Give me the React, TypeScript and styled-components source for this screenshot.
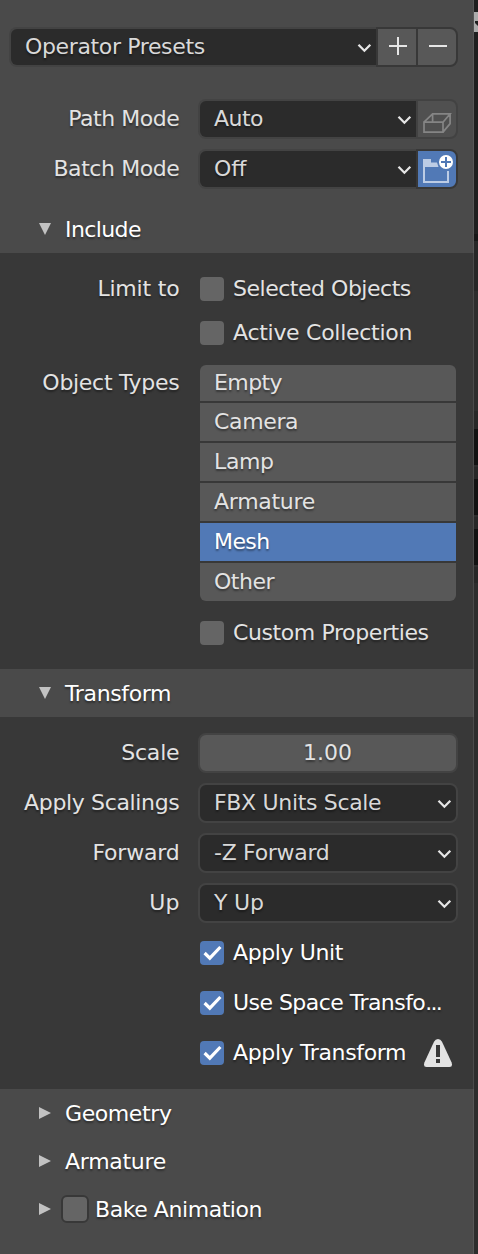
import React from 'react';
import styled, { createGlobalStyle, css } from 'styled-components';

const Global = createGlobalStyle`
  * { box-sizing: border-box; }
  body { margin: 0; background: #2b2b2b; }
`;

const Window = styled.div`
  display: flex;
  width: 478px;
  height: 1254px;
  overflow: hidden;
  font: 22px/25px 'DejaVu Sans', sans-serif;
  color: #e3e3e3;
  text-shadow: 0 2px 2px rgba(0, 0, 0, 0.4);
`;

const Sidebar = styled.main`
  width: 474px;
  flex: none;
  background: #4a4a4a;
  border-right: 1px solid #575757;
`;

const TopArea = styled.section`
  height: 205px;
  padding: 27px 0 0 9px;
`;

const PresetRow = styled.div`
  display: flex;
  width: 449px;
  margin-bottom: 32px;
`;

const Row = styled.div<{ $gap?: number }>`
  display: flex;
  align-items: center;
  height: 40px;
  margin-bottom: ${(p) => p.$gap ?? 10}px;
`;

const Tracked = styled.span<{ $track: number }>`
  letter-spacing: ${(p) => p.$track}px;
  white-space: nowrap;
`;

const Label = styled.span<{ $inset?: number }>`
  width: ${(p) => 180 - (p.$inset ?? 0)}px;
  flex: none;
  margin-right: 18px;
  padding: 0 0.6px 2px 0;
  text-align: right;
  white-space: nowrap;
`;

const Field = styled.div<{ $joined?: boolean }>`
  display: flex;
  align-items: center;
  justify-content: space-between;
  width: ${(p) => (p.$joined ? 218 : 260)}px;
  height: 40px;
  padding: 0 4px 2px 14px;
  background: #2b2b2b;
  border: 2px solid #434343;
  border-radius: ${(p) => (p.$joined ? '8px 0 0 8px' : '8px')};
  ${(p) => p.$joined && css`border-right: 0;`}
  color: #d9d9d9;
`;

const PresetField = styled(Field)`
  flex: 1;
  width: auto;
`;

const NumberField = styled(Field)`
  justify-content: center;
  padding: 0 1px 2px 0;
  background: #585858;
  color: #e3e3e3;
`;

const IconButton = styled.button<{ $last?: boolean; $tone?: 'active' | 'disabled' }>`
  display: flex;
  flex: none;
  width: ${(p) => (p.$last ? 42 : 40)}px;
  height: 40px;
  padding: 0;
  background: ${(p) => (p.$tone === 'active' ? '#5179b6' : p.$tone === 'disabled' ? '#505050' : '#585858')};
  border: 2px solid ${(p) => (p.$tone === 'disabled' ? '#424242' : '#383838')};
  border-right-width: ${(p) => (p.$last ? 2 : 0)}px;
  border-radius: ${(p) => (p.$last ? '0 8px 8px 0' : '0')};
`;

const Header = styled.header`
  display: flex;
  align-items: center;
  height: 48px;
  padding: 0 0 1px 38px;
  color: #fff;
`;

const Title = styled.span<{ $gap?: number }>`
  margin-left: ${(p) => p.$gap ?? 13}px;
  padding-top: 2px;
`;

const Body = styled.section`
  width: 473px;
  padding: 16px 0;
  background: #383838;
  box-shadow: 1px 0 #4a4a4a;
`;

const IncludeBody = styled(Body)`
  height: 416px;
`;

const TransformBody = styled(Body)`
  height: 372px;
`;

const Box = styled.span<{ $checked?: boolean; $outlined?: boolean }>`
  display: flex;
  flex: none;
  width: ${(p) => (p.$outlined ? 28 : 24)}px;
  height: ${(p) => (p.$outlined ? 28 : 24)}px;
  margin-left: ${(p) => (p.$outlined ? 9 : 0)}px;
  background: ${(p) => (p.$checked ? '#5179b6' : '#656565')};
  border: ${(p) => (p.$outlined ? '2px solid #383838' : '0')};
  border-radius: ${(p) => (p.$outlined ? 6 : 4)}px;
`;

const CheckLabel = styled.label<{ $checked?: boolean }>`
  display: flex;
  align-items: center;
  margin-left: 2px;
  white-space: nowrap;
  color: ${(p) => (p.$checked ? '#fff' : '#e3e3e3')};
`;

const CheckText = styled.span`
  margin-left: 9px;
  padding-bottom: 2px;
`;

const Limits = styled.div`
  display: grid;
  gap: 4px;
  margin-bottom: 12px;
`;

const TypesRow = styled.div`
  display: flex;
  align-items: flex-start;
  margin-bottom: 12px;
`;

const TypesLabel = styled(Label)`
  padding-top: 5px;
  margin-right: 20px;
`;

const TypeList = styled.ul`
  display: grid;
  gap: 2px;
  width: 256px;
  margin: 0;
  padding: 0;
  list-style: none;
  border-radius: 6px;
  overflow: hidden;
`;

const TypeItem = styled.li<{ $selected?: boolean }>`
  height: 38px;
  padding: 6px 14px;
  background: ${(p) => (p.$selected ? '#5179b6' : '#585858')};
  color: ${(p) => (p.$selected ? '#fff' : '#e3e3e3')};
  &:first-child { height: 36px; padding-top: 5px; }
`;

const WarningWrap = styled.span`
  display: flex;
  margin-left: 17px;
`;

const Strip = styled.aside`
  flex: 1;
  display: flex;
  flex-direction: column;
  background: #2d2d2d;
`;

const Slice = styled.i<{ $h: number; $c: string }>`
  display: flex;
  flex: none;
  height: ${(p) => p.$h}px;
  background: ${(p) => p.$c};
`;

const ChevronSvg = styled.svg`
  flex: none;
  margin-top: 6px;
`;

const Chevron = () => (
  <ChevronSvg width="16" height="12" viewBox="0 0 16 12">
    <path d="M2.5 1.8 8.4 7.7 14.3 1.8" fill="none" stroke="#e6e6e6" strokeWidth="2.3" />
  </ChevronSvg>
);

const Triangle = ({ open }: { open?: boolean }) => (
  <svg width="14" height="14" viewBox="0 0 14 14">
    <path d={open ? 'M1 1H13L7 13Z' : 'M1 1V13L13 7Z'} fill="#c2c2c2" />
  </svg>
);

const Check = () => (
  <svg width="24" height="24" viewBox="0 0 24 24">
    <path d="M4.6 12 9.8 17.2 20.4 6" fill="none" stroke="#fff" strokeWidth="3.2" />
  </svg>
);

const Plus = () => (
  <svg width="38" height="36" viewBox="0 0 38 36">
    <path d="M11 17H29M20 8V26" stroke="#e6e6e6" strokeWidth="2" />
  </svg>
);

const Minus = () => (
  <svg width="38" height="36" viewBox="0 0 38 36">
    <path d="M11 17H29" stroke="#e6e6e6" strokeWidth="2" />
  </svg>
);

const BoxIcon = () => (
  <svg width="38" height="36" viewBox="0 0 38 36">
    <g fill="none" stroke="#858585" strokeWidth="1.7">
      <path d="M6 21.2H25V31.1H6ZM6 21.2 14.6 12.9H32.1L25 21.2M32.1 12.9V22.6L25 31.1M14.6 12.9V21" />
    </g>
  </svg>
);

const FolderIcon = () => (
  <svg width="38" height="36" viewBox="0 0 38 36">
    <path d="M5 8H13V11.5H19L20.5 16H5Z" fill="#bccce5" />
    <path d="M6 14V31H30V20" fill="none" stroke="#bccce5" strokeWidth="2" />
    <circle cx="28" cy="11" r="7" fill="#fff" />
    <path d="M23 11H33M28 6V16" stroke="#5179b6" strokeWidth="2" />
  </svg>
);

const Warning = () => (
  <svg width="30" height="30" viewBox="0 0 30 30">
    <path d="M15 1Q17.6 1 19 3.8L28.5 24.2Q30.2 29 26.5 29H3.5Q-0.2 29 1.5 24.2L11 3.8Q12.4 1 15 1Z" fill="#e3e3e3" />
    <path d="M13 7H17V19H13ZM13 21H17V25H13Z" fill="#383838" />
  </svg>
);

const HandleArrow = () => (
  <svg width="4" height="20" viewBox="0 0 4 20">
    <path d="M1 9H4V14L1 11Z" fill="#1e1e1e" />
  </svg>
);

/* Letter spacing per caption, in pixels. */
const tracking: Record<string, number> = {
  'Path Mode': -0.45, 'Batch Mode': -0.42, Auto: -0.5, Off: 0, Include: -0.6,
  'Limit to': -0.2, 'Selected Objects': -0.48, 'Active Collection': -0.28, 'Object Types': -0.3,
  Empty: -0.6, Camera: -0.35, Lamp: -0.35, Armature: -0.28, Mesh: -0.6, Other: -0.5,
  'Custom Properties': -0.4, Scale: -0.2, 'Apply Scalings': -0.35, 'FBX Units Scale': -0.33,
  Forward: -0.22, '-Z Forward': -0.3, Up: 0, 'Y Up': -0.2, '1.00': 0, 'Apply Unit': -0.4,
  'Use Space Transfo': -0.54, Geometry: -0.4, 'Bake Animation': -0.44, '...': -1.8,
};

const Text = ({ children }: { children: string }) => (
  <Tracked $track={tracking[children] ?? -0.36}>{children}</Tracked>
);

type CheckboxProps = { text: string; cut?: boolean; checked?: boolean; children?: React.ReactNode };

const Checkbox = ({ text, cut, checked, children }: CheckboxProps) => (
  <CheckLabel $checked={checked}>
    <Box $checked={checked}>{checked && <Check />}</Box>
    <CheckText><Text>{text}</Text>{cut && <Text>...</Text>}</CheckText>
    {children}
  </CheckLabel>
);

const slices: [number, string][] = [
  [12, '#1e1e1e'], [20, '#ababab'], [202, '#1f1f1f'], [7, '#171717'], [50, '#272727'],
  [120, '#2d2d2d'], [18, '#272727'], [36, '#121212'], [2, '#2d2d2d'], [12, '#272727'],
  [36, '#121212'], [2, '#2d2d2d'], [12, '#272727'], [36, '#121212'], [2, '#2d2d2d'], [16, '#272727'],
];

const types = ['Empty', 'Camera', 'Lamp', 'Armature', 'Mesh', 'Other'];

const dropdowns = [
  ['Apply Scalings', 'FBX Units Scale'],
  ['Forward', '-Z Forward'],
  ['Up', 'Y Up'],
];

export default function App() {
  return (
    <Window>
      <Global />
      <Sidebar>
        <TopArea>
          <PresetRow>
            <PresetField $joined><Text>Operator Presets</Text><Chevron /></PresetField>
            <IconButton aria-label="Add preset"><Plus /></IconButton>
            <IconButton $last aria-label="Remove preset"><Minus /></IconButton>
          </PresetRow>
          <Row>
            <Label $inset={9}><Text>Path Mode</Text></Label>
            <Field $joined><Text>Auto</Text><Chevron /></Field>
            <IconButton $last $tone="disabled" aria-label="Embed textures"><BoxIcon /></IconButton>
          </Row>
          <Row>
            <Label $inset={9}><Text>Batch Mode</Text></Label>
            <Field $joined><Text>Off</Text><Chevron /></Field>
            <IconButton $last $tone="active" aria-label="Batch own directory"><FolderIcon /></IconButton>
          </Row>
        </TopArea>

        <Header><Triangle open /><Title><Text>Include</Text></Title></Header>
        <IncludeBody>
          <Limits>
            <Row $gap={0}><Label><Text>Limit to</Text></Label><Checkbox text="Selected Objects" /></Row>
            <Row $gap={0}><Label /><Checkbox text="Active Collection" /></Row>
          </Limits>
          <TypesRow>
            <TypesLabel><Text>Object Types</Text></TypesLabel>
            <TypeList>
              {types.map((t) => <TypeItem key={t} $selected={t === 'Mesh'}><Text>{t}</Text></TypeItem>)}
            </TypeList>
          </TypesRow>
          <Row><Label /><Checkbox text="Custom Properties" /></Row>
        </IncludeBody>

        <Header><Triangle open /><Title><Text>Transform</Text></Title></Header>
        <TransformBody>
          <Row><Label><Text>Scale</Text></Label><NumberField><Text>1.00</Text></NumberField></Row>
          {dropdowns.map(([label, value]) => (
            <Row key={label}>
              <Label><Text>{label}</Text></Label>
              <Field><Text>{value}</Text><Chevron /></Field>
            </Row>
          ))}
          <Row><Label /><Checkbox checked text="Apply Unit" /></Row>
          <Row><Label /><Checkbox checked cut text="Use Space Transfo" /></Row>
          <Row>
            <Label />
            <Checkbox checked text="Apply Transform"><WarningWrap><Warning /></WarningWrap></Checkbox>
          </Row>
        </TransformBody>

        <Header><Triangle /><Title><Text>Geometry</Text></Title></Header>
        <Header><Triangle /><Title><Text>Armature</Text></Title></Header>
        <Header><Triangle /><Box $outlined /><Title $gap={6}><Text>Bake Animation</Text></Title></Header>
      </Sidebar>
      <Strip>
        {slices.map(([h, c], i) => <Slice key={i} $h={h} $c={c}>{i === 1 && <HandleArrow />}</Slice>)}
      </Strip>
    </Window>
  );
}
